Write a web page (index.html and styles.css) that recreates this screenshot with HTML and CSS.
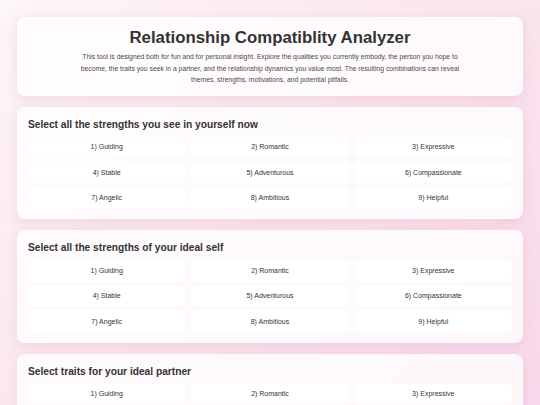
FILE: index.html
```html
<!DOCTYPE html>
<html lang="en">
<head>
    <meta charset="UTF-8">
    <meta name="viewport" content="width=device-width, initial-scale=1.0">
    <title>Relationship Compatiblity Analyzer</title>
    <link rel="stylesheet" href="styles.css">
</head>
<body>
    <div class="page">
        <div class="card intro">
            <h1>Relationship Compatiblity Analyzer</h1>
            <p>This tool is designed both for fun and for personal insight. Explore the qualities you currently embody, the person you hope to become, the traits you seek in a partner, and the relationship dynamics you value most. The resulting combinations can reveal themes, strengths, motivations, and potential pitfalls.</p>
        </div>

        <div class="card section">
            <h2>Select all the strengths you see in yourself now</h2>
            <div class="options">
                <button class="option">1) Guiding</button>
                <button class="option">2) Romantic</button>
                <button class="option">3) Expressive</button>
                <button class="option">4) Stable</button>
                <button class="option">5) Adventurous</button>
                <button class="option">6) Compassionate</button>
                <button class="option">7) Angelic</button>
                <button class="option">8) Ambitious</button>
                <button class="option">9) Helpful</button>
            </div>
        </div>

        <div class="card section">
            <h2>Select all the strengths of your ideal self</h2>
            <div class="options">
                <button class="option">1) Guiding</button>
                <button class="option">2) Romantic</button>
                <button class="option">3) Expressive</button>
                <button class="option">4) Stable</button>
                <button class="option">5) Adventurous</button>
                <button class="option">6) Compassionate</button>
                <button class="option">7) Angelic</button>
                <button class="option">8) Ambitious</button>
                <button class="option">9) Helpful</button>
            </div>
        </div>

        <div class="card section">
            <h2>Select traits for your ideal partner</h2>
            <div class="options">
                <button class="option">1) Guiding</button>
                <button class="option">2) Romantic</button>
                <button class="option">3) Expressive</button>
                <button class="option">4) Stable</button>
                <button class="option">5) Adventurous</button>
                <button class="option">6) Compassionate</button>
                <button class="option">7) Angelic</button>
                <button class="option">8) Ambitious</button>
                <button class="option">9) Helpful</button>
            </div>
        </div>
    </div>
</body>
</html>
```

FILE: styles.css
```css
html, body {
    margin: 0;
    padding: 0;
}
body {
    min-height: 100vh;
    background: linear-gradient(135deg, #fdf6f7 0%, #fbe6ee 50%, #f8d8ea 100%);
    background-attachment: fixed;
    color: #333;
    font-family: "Liberation Sans", Arial, sans-serif;
}
.page {
    padding: 17px 17px 0;
    display: flex;
    flex-direction: column;
    gap: 11px;
}
.card {
    background-color: rgba(255, 255, 255, 0.8);
    border-radius: 8px;
    box-shadow: 0 3px 12px rgba(220, 170, 195, 0.35);
}
.intro {
    padding: 10px 20px 10px;
    text-align: center;
}
.intro h1 {
    margin: 0 0 3px;
    font-size: 16.8px;
    line-height: 21px;
    font-weight: bold;
    color: #333;
}
.intro p {
    max-width: 385px;
    margin: 0 auto;
    font-size: 6.8px;
    line-height: 11.5px;
    color: #4a4a4a;
}
.section {
    padding: 11px;
}
.section h2 {
    margin: 0 0 6px;
    font-size: 10.2px;
    line-height: 13px;
    font-weight: bold;
    color: #333;
}
.options {
    display: grid;
    grid-template-columns: repeat(3, 1fr);
    gap: 5px 6px;
}
.option {
    height: 20.5px;
    padding: 0;
    background-color: rgba(255, 255, 255, 0.9);
    border: none;
    border-radius: 5px;
    font-family: "Liberation Sans", Arial, sans-serif;
    font-size: 7px;
    color: #333;
    cursor: pointer;
}
```
